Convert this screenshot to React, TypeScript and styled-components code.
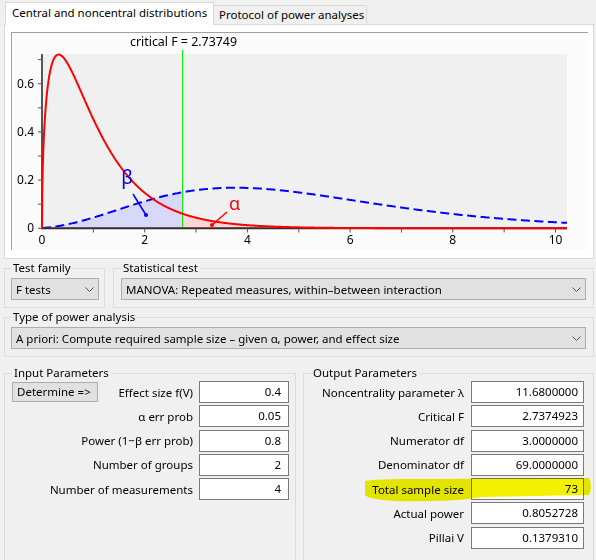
import React from "react";
import styled, { createGlobalStyle } from "styled-components";

const GlobalStyle = createGlobalStyle`
  html, body {
    margin: 0;
    padding: 0;
    background: #f0f0f0;
    overflow: hidden;
  }
  body {
    font-family: "Noto Sans", "DejaVu Sans", sans-serif;
    font-size: 11.5px;
    color: #000;
  }
`;

const Window = styled.div`
  position: relative;
  width: 596px;
  height: 560px;
  padding: 2px 2px 0 4px;
  box-sizing: border-box;
`;

const TabBar = styled.div`
  display: flex;
  align-items: flex-end;
  height: 22px;
  padding-left: 1px;
  position: relative;
  z-index: 1;
`;

const Tab = styled.div<{ $active?: boolean; $w: number }>`
  box-sizing: border-box;
  width: ${(p) => p.$w}px;
  height: ${(p) => (p.$active ? "23px" : "19px")};
  margin-bottom: ${(p) => (p.$active ? "-1px" : "0")};
  padding: ${(p) => (p.$active ? "0 0 2px 6px" : "0 0 0 5px")};
  background: ${(p) => (p.$active ? "#fff" : "#f0f0f0")};
  border: 1px solid #d9d9d9;
  border-bottom: none;
  border-left: ${(p) => (p.$active ? "1px solid #d9d9d9" : "none")};
  display: flex;
  align-items: center;
  white-space: nowrap;
  line-height: 1;
`;

const TabPanel = styled.div`
  box-sizing: border-box;
  height: 235px;
  border: 1px solid #d9d9d9;
  background: #fff;
  padding: 7px 5px 0 6px;
`;

const ChartFrame = styled.div`
  width: 576px;
  height: 217px;
  border-top: 1px solid #a0a0a0;
  border-left: 1px solid #a0a0a0;
  background: #fbfbfb;
  svg {
    display: block;
  }
`;

const Row = styled.div<{ $mt: number; $gap?: number }>`
  display: flex;
  gap: ${(p) => p.$gap ?? 8}px;
  margin-top: ${(p) => p.$mt}px;
`;

const Group = styled.fieldset<{ $w?: number; $pr?: number; $pl?: number; $h?: number }>`
  margin: 0;
  min-width: 0;
  box-sizing: border-box;
  border: 1px solid #dcdcdc;
  padding: 2px ${(p) => p.$pr ?? 7}px 7px ${(p) => p.$pl ?? 6}px;
  width: ${(p) => (p.$w ? `${p.$w}px` : "auto")};
  flex: ${(p) => (p.$w ? "none" : "1")};
  ${(p) => (p.$h ? `height: ${p.$h}px; padding-top: 0;` : "")}
`;

const Legend = styled.legend`
  padding: 0 2px;
  line-height: 16px;
  font-size: 11.5px;
`;

const Combo = styled.div`
  box-sizing: border-box;
  height: 22px;
  border: 1px solid #adadad;
  background: #e1e1e1;
  display: flex;
  align-items: center;
  justify-content: space-between;
  padding: 0 4px;
  white-space: nowrap;
`;

const ParamList = styled.div`
  display: flex;
  flex-direction: column;
  gap: 2.3px;
`;

const ParamRow = styled.div`
  display: flex;
  align-items: center;
  height: 22px;
`;

const ParamLabel = styled.div<{ $gap: number }>`
  flex: 1;
  text-align: right;
  white-space: nowrap;
  margin-right: ${(p) => p.$gap}px;
`;

const ValueBox = styled.div<{ $w: number; $pr: number }>`
  box-sizing: border-box;
  width: ${(p) => p.$w}px;
  height: 22px;
  line-height: 20px;
  border: 1px solid #7a7a7a;
  background: #fff;
  text-align: right;
  padding-right: ${(p) => p.$pr}px;
`;

const Button = styled.div`
  box-sizing: border-box;
  width: 86px;
  height: 20px;
  line-height: 18px;
  border: 1px solid #adadad;
  background: #e1e1e1;
  padding-left: 4px;
  white-space: nowrap;
`;

const Highlight = styled.svg`
  position: absolute;
  left: 364px;
  top: 476px;
  mix-blend-mode: multiply;
  pointer-events: none;
`;

const Chevron = () => (
  <svg width="9" height="5" viewBox="0 0 9 5">
    <polyline points="0.5,0.5 4.5,4.5 8.5,0.5" fill="none" stroke="#505050" strokeWidth="1" />
  </svg>
);

// ---- distributions ----
const lgamma = (z: number): number => {
  const g = 7;
  const c = [
    0.99999999999980993, 676.5203681218851, -1259.1392167224028, 771.32342877765313,
    -176.61502916214059, 12.507343278686905, -0.13857109526572012, 9.9843695780195716e-6,
    1.5056327351493116e-7,
  ];
  if (z < 0.5) return Math.log(Math.PI / Math.sin(Math.PI * z)) - lgamma(1 - z);
  z -= 1;
  let x = c[0];
  for (let i = 1; i < g + 2; i++) x += c[i] / (z + i);
  const t = z + g + 0.5;
  return 0.5 * Math.log(2 * Math.PI) + (z + 0.5) * Math.log(t) - t + Math.log(x);
};

const fpdf = (x: number, d1: number, d2: number) => {
  if (x <= 0) return 0;
  const lb = lgamma(d1 / 2) + lgamma(d2 / 2) - lgamma((d1 + d2) / 2);
  return Math.exp(
    (d1 / 2) * Math.log(d1 * x) + (d2 / 2) * Math.log(d2) - ((d1 + d2) / 2) * Math.log(d1 * x + d2) - Math.log(x) - lb
  );
};

const ncfpdf = (x: number, d1: number, d2: number, lam: number) => {
  let s = 0;
  const h = lam / 2;
  for (let k = 0; k < 80; k++) {
    const w = Math.exp(-h + k * Math.log(h) - lgamma(k + 1));
    const dk = d1 + 2 * k;
    s += w * (d1 / dk) * fpdf((x * d1) / dk, dk, d2);
  }
  return s;
};

const D1 = 3;
const D2 = 69;
const LAMBDA = 11.68;
const CRIT = 2.73749;
const XMAX = 10.224;
const X = (v: number) => 42 + v * 51.35;
const Y = (p: number) => 228.3 - p * 241;

const sample = (f: (v: number) => number, a: number, b: number, step: number) => {
  const pts: string[] = [];
  for (let v = a; v < b; v += step) pts.push(`${X(v).toFixed(2)},${Y(f(v)).toFixed(2)}`);
  pts.push(`${X(b).toFixed(2)},${Y(f(b)).toFixed(2)}`);
  return pts;
};

const central = (v: number) => fpdf(v, D1, D2);
const noncentral = (v: number) => ncfpdf(v, D1, D2, LAMBDA);

const redPts = sample(central, 0, XMAX, 0.004);
const bluePts = sample(noncentral, 0, XMAX, 0.02);
const alphaPts = sample(central, CRIT, XMAX, 0.02);
const betaPts = sample(noncentral, 0, CRIT, 0.02);

const Chart = () => {
  const yTicks = [0, 0.1, 0.2, 0.3, 0.4, 0.5, 0.6, 0.7];
  const xTicks = [1, 2, 3, 4, 5, 6, 7, 8, 9, 10];
  return (
    <svg width="576" height="217" viewBox="12 33 576 217" fontFamily='"Noto Sans", sans-serif'>
      <text x="183.5" y="45.5" fontSize="12.4" textAnchor="middle" fill="#000">
        critical F = 2.73749
      </text>
      <rect x="42" y="54" width="525" height="174.3" fill="#f0f0f0" />
      <polygon points={`${X(CRIT)},${Y(0)} ${alphaPts.join(" ")} ${X(XMAX)},${Y(0)}`} fill="#fcd6d6" />
      <polygon points={`${X(0)},${Y(0)} ${betaPts.join(" ")} ${X(CRIT)},${Y(0)}`} fill="#d8d8fa" />
      <line x1={X(CRIT)} y1="50" x2={X(CRIT)} y2="228.3" stroke="#00ee00" strokeWidth="1" />
      <polyline points={bluePts.join(" ")} fill="none" stroke="#0000ff" strokeWidth="2" strokeDasharray="9 4.5" />
      {/* axes */}
      <line x1="42" y1="54" x2="42" y2="228.3" stroke="#555" strokeWidth="2" />
      <line x1="41" y1="228.3" x2="567" y2="228.3" stroke="#3a2a2a" strokeWidth="2" />
      <polyline points={redPts.join(" ")} fill="none" stroke="#ff0000" strokeWidth="2" />
      {yTicks.map((t) => (
        <line key={t} x1="38" y1={Y(t)} x2="42" y2={Y(t)} stroke="#555" strokeWidth="1" />
      ))}
      {[0, 0.2, 0.4, 0.6].map((t) => (
        <text key={t} x="34" y={Y(t) + 4} fontSize="12" textAnchor="end" fill="#000">
          {t === 0 ? "0" : t.toFixed(1)}
        </text>
      ))}
      {xTicks.map((t) => (
        <line key={t} x1={X(t)} y1="228.3" x2={X(t)} y2="232.5" stroke="#555" strokeWidth="1" />
      ))}
      {[0, 2, 4, 6, 8, 10].map((t) => (
        <text key={t} x={X(t)} y="244" fontSize="12" textAnchor="middle" fill="#000">
          {t}
        </text>
      ))}
      {/* beta marker */}
      <text x="127" y="184" fontSize="19" textAnchor="middle" fill="#0000ff">
        β
      </text>
      <line x1="133" y1="194" x2="146" y2="215" stroke="#0000ff" strokeWidth="1.5" />
      <circle cx="146" cy="215" r="2" fill="#0000ff" />
      {/* alpha marker */}
      <text x="234.5" y="209.5" fontSize="18" textAnchor="middle" fill="#ff0000">
        α
      </text>
      <line x1="227" y1="212" x2="212" y2="225" stroke="#ff0000" strokeWidth="1.5" />
      <circle cx="212" cy="225" r="2" fill="#ff0000" />
    </svg>
  );
};

const inputs = [
  { label: "Effect size f(V)", value: "0.4" },
  { label: "α err prob", value: "0.05" },
  { label: "Power (1−β err prob)", value: "0.8" },
  { label: "Number of groups", value: "2" },
  { label: "Number of measurements", value: "4" },
];

const outputs = [
  { label: "Noncentrality parameter λ", value: "11.6800000" },
  { label: "Critical F", value: "2.7374923" },
  { label: "Numerator df", value: "3.0000000" },
  { label: "Denominator df", value: "69.0000000" },
  { label: "Total sample size", value: "73" },
  { label: "Actual power", value: "0.8052728" },
  { label: "Pillai V", value: "0.1379310" },
];

export default function App() {
  return (
    <>
      <GlobalStyle />
      <Window>
        <TabBar>
          <Tab $active $w={209}>
            Central and noncentral distributions
          </Tab>
          <Tab $w={153}>Protocol of power analyses</Tab>
        </TabBar>
        <TabPanel>
          <ChartFrame>
            <Chart />
          </ChartFrame>
        </TabPanel>

        <Row $mt={1}>
          <Group $w={101} $pr={5}>
            <Legend>Test family</Legend>
            <Combo>
              <span>F tests</span>
              <Chevron />
            </Combo>
          </Group>
          <Group $pl={7}>
            <Legend>Statistical test</Legend>
            <Combo>
              <span>MANOVA: Repeated measures, within–between interaction</span>
              <Chevron />
            </Combo>
          </Group>
        </Row>

        <Row $mt={1}>
          <Group>
            <Legend>Type of power analysis</Legend>
            <Combo>
              <span>A priori: Compute required sample size – given α, power, and effect size</span>
              <Chevron />
            </Combo>
          </Group>
        </Row>

        <Row $mt={8} $gap={7}>
          <Group $w={292} $pl={7} $pr={6} $h={200}>
            <Legend>Input Parameters</Legend>
            <ParamList>
              {inputs.map((r, i) => (
                <ParamRow key={r.label}>
                  {i === 0 && <Button>Determine =&gt;</Button>}
                  <ParamLabel $gap={6}>{r.label}</ParamLabel>
                  <ValueBox $w={90} $pr={7}>
                    {r.value}
                  </ValueBox>
                </ParamRow>
              ))}
            </ParamList>
          </Group>
          <Group $pl={7} $pr={9} $h={200}>
            <Legend>Output Parameters</Legend>
            <ParamList>
              {outputs.map((r) => (
                <ParamRow key={r.label}>
                  <ParamLabel $gap={7}>{r.label}</ParamLabel>
                  <ValueBox $w={113} $pr={5}>
                    {r.value}
                  </ValueBox>
                </ParamRow>
              ))}
            </ParamList>
          </Group>
        </Row>

        <Highlight width="230" height="28" viewBox="364 476 230 28">
          <path
            d="M365,481 C380,479 400,479 430,479 L589,478 Q593,486 589,495 L482,497 C462,501 420,502 395,501 C378,500 367,498 365,495 Z"
            fill="#f2f200"
          />
        </Highlight>
      </Window>
    </>
  );
}
